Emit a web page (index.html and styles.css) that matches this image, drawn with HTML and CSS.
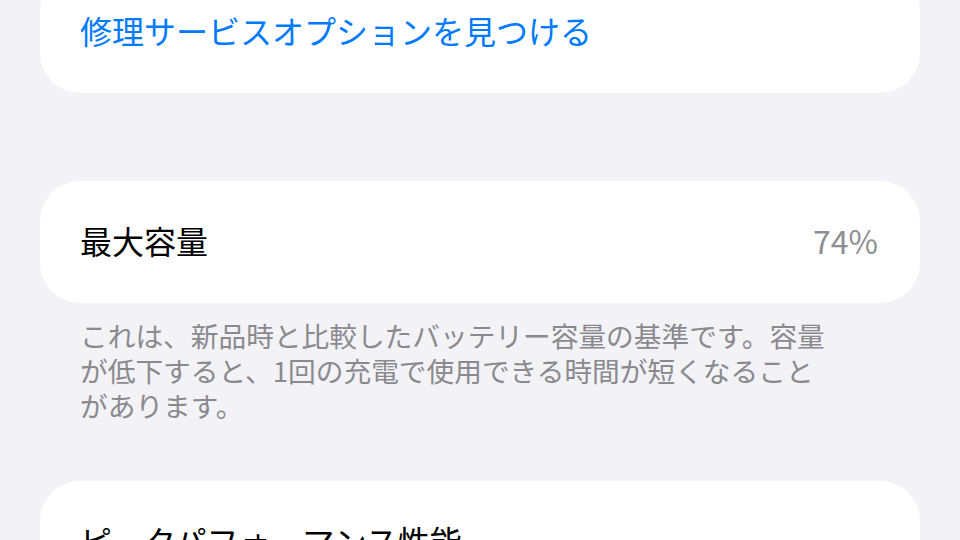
FILE: index.html
```html
<!DOCTYPE html>
<html>

	<head>
		<meta charset="UTF-8">
		<title>バッテリーの状態</title>
		<link rel="stylesheet" href="styles.css">
	</head>

	<body>
		<div class="page">
			<div class="group group-top">
				<a class="row link" href="javascript:;">修理サービスオプションを見つける</a>
			</div>

			<div class="group">
				<div class="row">
					<span class="label">最大容量</span>
					<span class="value">74%</span>
				</div>
			</div>
			<p class="footer">これは、新品時と比較したバッテリー容量の基準です。容量が低下すると、1回の充電で使用できる時間が短くなることがあります。</p>

			<div class="group">
				<div class="row">
					<span class="label">ピークパフォーマンス性能</span>
				</div>
			</div>
		</div>
	</body>

</html>
```

FILE: styles.css
```css
* {
	margin: 0;
	padding: 0;
	box-sizing: border-box;
}

body {
	background: #f2f2f7;
	font-family: "Noto Sans CJK JP", "Liberation Sans", sans-serif;
	color: #000;
	overflow: hidden;
}

.page {
	display: flex;
	flex-direction: column;
	padding: 0 40px;
}

.group {
	background: #fff;
	border-radius: 40px;
	overflow: hidden;
}

/* first group is scrolled partly out of view */
.group-top {
	margin-top: -29px;
	margin-bottom: 88px;
}

.row {
	display: flex;
	align-items: center;
	justify-content: space-between;
	height: 122px;
	padding: 0 40px 4px;
	font-size: 32px;
	line-height: 1;
	text-decoration: none;
}

.link {
	color: #007aff;
}

.value {
	color: #8e8e93;
	padding-right: 2px;
}

.footer {
	width: 795px;
	padding: 15px 0 0 40px;
	margin-bottom: 58px;
	font-size: 27.7px;
	line-height: 35px;
	color: #8a8a8e;
}
```
